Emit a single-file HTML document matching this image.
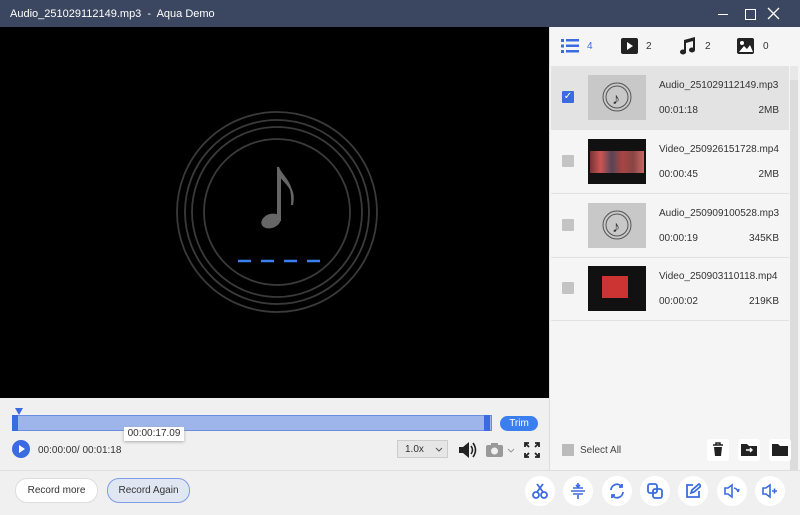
<!DOCTYPE html><html><head><style>
body{margin:0;width:800px;height:514px;overflow:hidden;font-family:"Liberation Sans",sans-serif;background:#3b4760;position:relative}
.a{position:absolute}
.t{color:#fff;font-size:11px}
.item{position:absolute;left:551px;width:238px;height:63px;border-bottom:1px solid #e2e2e2}
.cb{position:absolute;left:11px;top:25px;width:12px;height:12px;background:#c4c4c4;border-radius:1px}
.th{position:absolute;left:37px;top:9px;width:58px;height:45px}
.nm{position:absolute;left:108px;top:14px;font-size:10px;color:#333}
.du{position:absolute;left:108px;top:39px;font-size:10px;color:#333}
.sz{position:absolute;right:10px;top:39px;font-size:10px;color:#333}
.rb{position:absolute;top:476px;width:30px;height:30px;border-radius:50%;background:#fff}
.rb svg{position:absolute;left:7px;top:7px}
</style></head><body>
<div class="a t" style="left:10px;top:8px">Audio_251029112149.mp3 &nbsp;-&nbsp; Aqua Demo</div>
<div class="a" style="left:718px;top:14px;width:10px;height:1px;background:#fff"></div>
<div class="a" style="left:745px;top:9px;width:9px;height:9px;border:1px solid #fff"></div>
<svg class="a" style="left:767px;top:7px" width="13" height="13" stroke="#fff" stroke-width="1.3"><path d="M1 1l11 11M12 1L1 12"/></svg>
<div class="a" style="left:0;top:27px;width:549px;height:371px;background:#000"></div>
<svg class="a" style="left:0;top:27px" width="549" height="371">
<g fill="none" stroke="#3a3a3a" stroke-width="1.8"><circle cx="277" cy="185" r="100"/><circle cx="277" cy="185" r="92"/><circle cx="277" cy="185" r="85"/><circle cx="277" cy="185" r="73"/></g>
<ellipse cx="271" cy="194" rx="10" ry="7" fill="#666" transform="rotate(-20 271 194)"/>
<path d="M278 193V140c3 10 16 14 14 38c4-18-8-22-12-30V193z" fill="#666" stroke="#666" stroke-width="2"/>
<g stroke="#3b7ef0" stroke-width="2.5"><path d="M238 234h13M261 234h13M284 234h13M307 234h13"/></g></svg>
<div class="a" style="left:0;top:398px;width:549px;height:72px;background:#f0f0f0"></div>
<div class="a" style="left:0;top:470px;width:800px;height:44px;background:#f0f0f0;border-top:1px solid #dedede"></div>
<div class="a" style="left:549px;top:27px;width:251px;height:443px;background:#f5f5f5;border-left:1px solid #ddd"></div>
<div class="a" style="left:12px;top:415px;width:478px;height:14px;background:#9db5ea;border:1px solid #6b8fdf"></div>
<div class="a" style="left:12px;top:415px;width:6px;height:16px;background:#3b6be0"></div>
<div class="a" style="left:484px;top:415px;width:6px;height:16px;background:#3b6be0"></div>
<div class="a" style="left:15px;top:408px;border:4px solid transparent;border-top:7px solid #3b6be0"></div>
<div class="a" style="left:500px;top:416px;width:38px;height:15px;border-radius:8px;background:#3b7ef0;color:#fff;font-size:10px;text-align:center;line-height:15px">Trim</div>
<div class="a" style="left:124px;top:427px;width:60px;height:14px;background:#fff;box-shadow:0 1px 3px #aaa;font-size:10px;line-height:14px;text-align:center;color:#333">00:00:17.09</div>
<div class="a" style="left:12px;top:440px;width:18px;height:18px;border-radius:50%;background:#3b6be0"></div>
<div class="a" style="left:19px;top:445px;border:4px solid transparent;border-left:6px solid #fff"></div>
<div class="a" style="left:38px;top:445px;font-size:10px;color:#333">00:00:00/ 00:01:18</div>
<div class="a" style="left:397px;top:440px;width:51px;height:18px;background:#e6e6e6;border:1px solid #ccc;font-size:10px;line-height:18px;color:#333;box-sizing:border-box;padding-left:7px">1.0x</div>
<svg class="a" style="left:435px;top:447px" width="8" height="5" stroke="#555" fill="none"><path d="M1 1l3 3 3-3"/></svg>
<svg class="a" style="left:458px;top:441px" width="20" height="18"><path d="M1 6h4l6-5v16l-6-5H1z" fill="#222"/><path d="M13 5q3 4 0 8M15 2q5 7 0 14" stroke="#222" stroke-width="1.6" fill="none"/></svg>
<svg class="a" style="left:486px;top:442px" width="32" height="16"><rect x="0" y="3" width="17" height="12" rx="2" fill="#999"/><rect x="5" y="1" width="7" height="3" fill="#999"/><circle cx="8.5" cy="9" r="3.5" fill="#f0f0f0"/><path d="M22 7l3 3 3-3" stroke="#999" fill="none"/></svg>
<svg class="a" style="left:524px;top:442px" width="16" height="16" stroke="#222" stroke-width="1.8" fill="none"><path d="M1 5V1h4M11 1h4v4M15 11v4h-4M5 15H1v-4M1 1l4 4M15 1l-4 4M15 15l-4-4M1 15l4-4"/></svg>
<div class="a" style="left:15px;top:478px;width:81px;height:23px;border-radius:12px;background:#fff;border:1px solid #ddd;font-size:10px;line-height:23px;text-align:center;color:#333">Record more</div>
<div class="a" style="left:107px;top:478px;width:81px;height:23px;border-radius:12px;background:#e0e6f2;border:1px solid #7c9ee6;font-size:10px;line-height:23px;text-align:center;color:#333">Record Again</div>
<svg class="a" style="left:561px;top:39px" width="18" height="14" fill="#3b6be0"><rect x="0" y="0" width="3" height="3"/><rect x="5" y="0" width="13" height="2.5"/><rect x="0" y="5.5" width="3" height="3"/><rect x="5" y="5.5" width="13" height="2.5"/><rect x="0" y="11" width="3" height="3"/><rect x="5" y="11" width="13" height="2.5"/></svg>
<div class="a" style="left:587px;top:41px;font-size:10px;color:#3b6be0">4</div>
<svg class="a" style="left:621px;top:38px" width="17" height="16"><rect width="17" height="16" rx="2" fill="#222"/><path d="M6 4l6 4-6 4z" fill="#fff"/></svg>
<div class="a" style="left:646px;top:41px;font-size:10px;color:#333">2</div>
<svg class="a" style="left:680px;top:37px" width="16" height="18" fill="#222"><path d="M4 3l11-3v13h-2V4L6 6v10H4z"/><ellipse cx="3" cy="15" rx="3" ry="2.5"/><ellipse cx="12" cy="13" rx="3" ry="2.5"/></svg>
<div class="a" style="left:705px;top:41px;font-size:10px;color:#333">2</div>
<svg class="a" style="left:737px;top:38px" width="17" height="16"><rect width="17" height="16" rx="2" fill="#222"/><circle cx="5" cy="5" r="2" fill="#fff"/><path d="M2 14l5-6 3 3 3-4 3 7z" fill="#fff"/></svg>
<div class="a" style="left:763px;top:41px;font-size:10px;color:#333">0</div>
<div class="a" style="left:790px;top:66px;width:8px;height:404px;background:#e8e8e8"></div>
<div class="a" style="left:790px;top:80px;width:8px;height:390px;background:#dcdcdc"></div>
<div class="item" style="top:66px;background:#e3e3e3">
<div class="cb" style="background:#3b6be0;color:#fff;font-size:10px;text-align:center;line-height:12px">✓</div>
<div class="th" style="background:#c8c8c8"><svg width="58" height="45"><circle cx="29" cy="22" r="14" fill="none" stroke="#555"/><circle cx="29" cy="22" r="11" fill="none" stroke="#555"/><text x="24" y="29" font-size="16" fill="#333">♪</text></svg></div>
<div class="nm">Audio_251029112149.mp3</div><div class="du">00:01:18</div><div class="sz">2MB</div></div>
<div class="item" style="top:130px"><div class="cb"></div>
<div class="th" style="background:#111"><div style="margin:12px 2px;height:22px;background:linear-gradient(90deg,#733,#c55,#545,#a44,#844,#c66)"></div></div>
<div class="nm">Video_250926151728.mp4</div><div class="du">00:00:45</div><div class="sz">2MB</div></div>
<div class="item" style="top:194px"><div class="cb"></div>
<div class="th" style="background:#c8c8c8"><svg width="58" height="45"><circle cx="29" cy="22" r="14" fill="none" stroke="#555"/><circle cx="29" cy="22" r="11" fill="none" stroke="#555"/><text x="24" y="29" font-size="16" fill="#333">♪</text></svg></div>
<div class="nm">Audio_250909100528.mp3</div><div class="du">00:00:19</div><div class="sz">345KB</div></div>
<div class="item" style="top:257px"><div class="cb"></div>
<div class="th" style="background:#111"><div style="margin:10px 18px 10px 14px;height:22px;background:#c33"></div></div>
<div class="nm">Video_250903110118.mp4</div><div class="du">00:00:02</div><div class="sz">219KB</div></div>
<div class="a" style="left:562px;top:444px;width:12px;height:12px;background:#bbb"></div>
<div class="a" style="left:580px;top:445px;font-size:10px;color:#444">Select All</div>
<div class="a" style="left:707px;top:439px;width:22px;height:22px;background:#fff;border-radius:3px"><svg width="22" height="22"><path d="M6 6h10M9 6V4h4v2" stroke="#222" stroke-width="1.5" fill="none"/><path d="M7 8h8l-1 9H8z" fill="#222"/></svg></div>
<div class="a" style="left:738px;top:439px;width:22px;height:22px;background:#fff;border-radius:3px"><svg width="22" height="22"><path d="M3 5h6l2 2h8v10H3z" fill="#222"/><path d="M8 11h6M12 9l2 2-2 2" stroke="#fff" stroke-width="1.4" fill="none"/></svg></div>
<div class="a" style="left:769px;top:439px;width:22px;height:22px;background:#fff;border-radius:3px"><svg width="22" height="22"><path d="M3 5h6l2 2h8v10H3z" fill="#222"/></svg></div>
<div class="rb" style="left:525px"><svg width="16" height="16" stroke="#3b6be0" stroke-width="1.8" fill="none"><circle cx="4" cy="12" r="3"/><circle cx="12" cy="12" r="3"/><path d="M5 9L11 1M11 9L5 1"/></svg></div>
<div class="rb" style="left:563px"><svg width="16" height="16" stroke="#3b6be0" stroke-width="1.6" fill="none"><path d="M1 8h14M3 5h10M3 11h10M8 0v4l-2-2M8 4l2-2M8 16v-4"/></svg></div>
<div class="rb" style="left:602px"><svg width="16" height="16" stroke="#3b6be0" stroke-width="1.8" fill="none"><path d="M2 7a6 6 0 0 1 11-3M14 9a6 6 0 0 1-11 3M13 1v3h-3M3 15v-3h3"/></svg></div>
<div class="rb" style="left:640px"><svg width="16" height="16" stroke="#3b6be0" stroke-width="1.8" fill="none"><rect x="1" y="1" width="9" height="9" rx="2"/><rect x="6" y="6" width="9" height="9" rx="2"/></svg></div>
<div class="rb" style="left:678px"><svg width="16" height="16" stroke="#3b6be0" stroke-width="1.8" fill="none"><path d="M8 2H2v12h12V8M6 10l1-3 7-6 2 2-7 6z"/></svg></div>
<div class="rb" style="left:717px"><svg width="16" height="16" stroke="#3b6be0" stroke-width="1.6" fill="none"><path d="M1 5h3l4-3v12l-4-3H1zM10 5a5 5 0 0 1 4 4M14 9l1-3"/></svg></div>
<div class="rb" style="left:755px"><svg width="16" height="16" stroke="#3b6be0" stroke-width="1.6" fill="none"><path d="M1 5h3l4-3v12l-4-3H1zM10 8h5M12.5 5.5v5"/></svg></div>
</body></html>
